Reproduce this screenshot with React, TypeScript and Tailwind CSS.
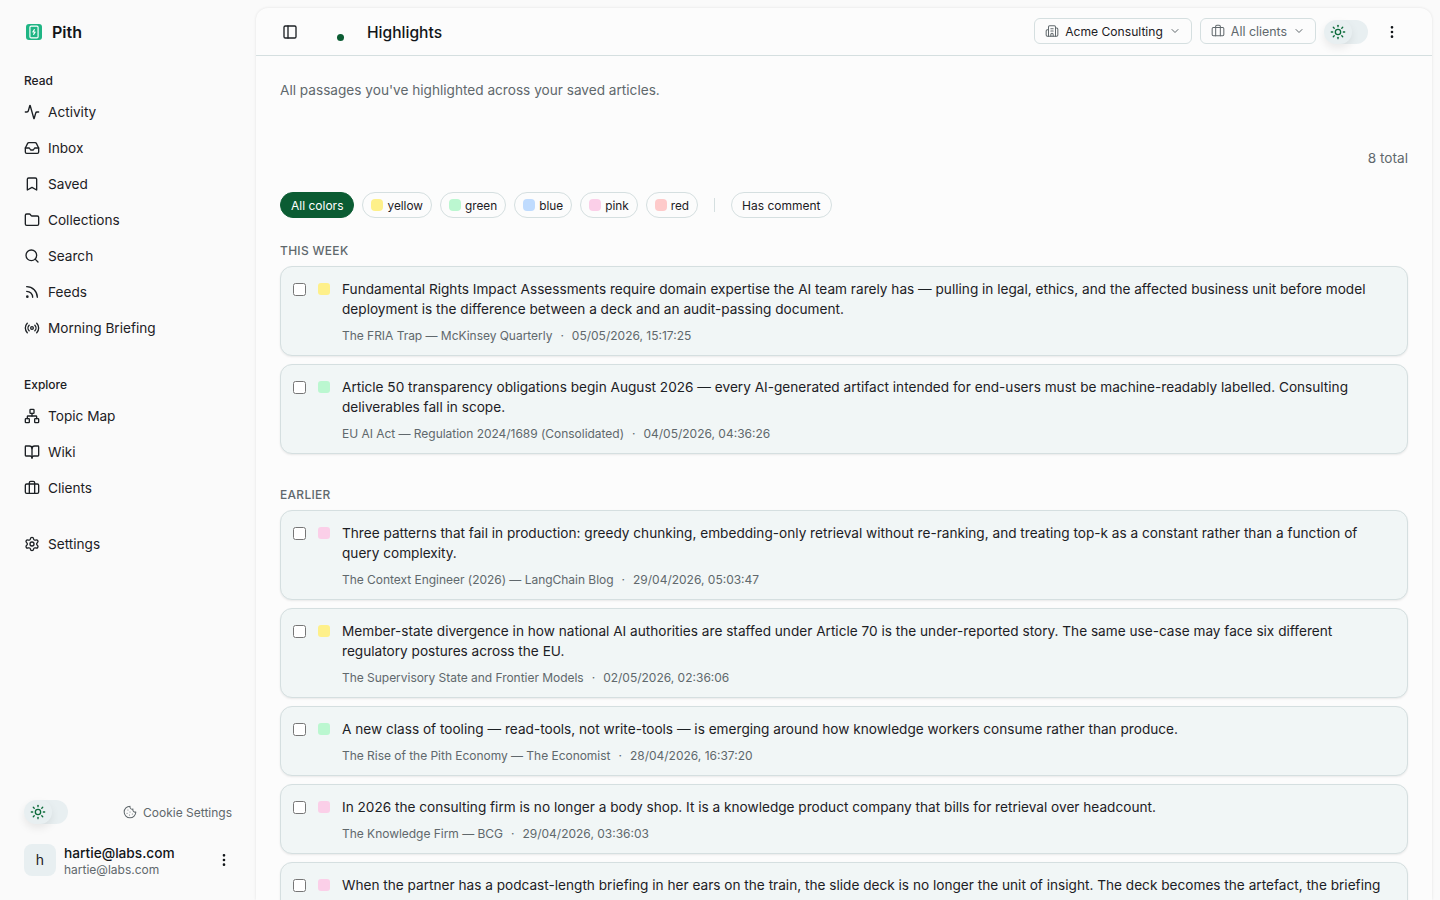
import React from "react";
import { Activity, Inbox, Bookmark, Folder, Search, Rss, Radio, Network, BookOpen, Briefcase, Settings, Cookie, Sun, EllipsisVertical, PanelLeft, Building2, ChevronDown, SmartphoneCharging } from "lucide-react";

const read = [
  { label: "Activity", Icon: Activity },
  { label: "Inbox", Icon: Inbox },
  { label: "Saved", Icon: Bookmark },
  { label: "Collections", Icon: Folder },
  { label: "Search", Icon: Search },
  { label: "Feeds", Icon: Rss },
  { label: "Morning Briefing", Icon: Radio },
];
const explore = [
  { label: "Topic Map", Icon: Network },
  { label: "Wiki", Icon: BookOpen },
  { label: "Clients", Icon: Briefcase },
];

function NavItem({ label, Icon }: { label: string; Icon: React.ElementType }) {
  return (
    <div className="flex h-9 items-center gap-2 text-[13.64px] text-[#1c2024]">
      <Icon size={16} strokeWidth={2} className="shrink-0" />
      <span>{label}</span>
    </div>
  );
}

function ThemeToggle() {
  return (
    <div className="flex h-6 w-11 items-center rounded-full bg-[#e8eff1]">
      <div className="flex h-6 w-7 items-center justify-center rounded-full shadow-[0_4px_8px_rgba(0,0,0,0.08)]">
        <Sun size={16} strokeWidth={2} className="text-[#0b6b3a]" />
      </div>
    </div>
  );
}

const colors: Record<string, string> = {
  yellow: "bg-[#fef08a]",
  green: "bg-[#bbf7d0]",
  blue: "bg-[#bfdbfe]",
  pink: "bg-[#fbcfe8]",
  red: "bg-[#fecaca]",
};

function Chip({ name }: { name: string }) {
  return (
    <div className="flex h-[26px] items-center gap-1 rounded-full border border-[#d5dfe0] px-2 text-[11.8px] text-[#1c2024]">
      <span className={`h-3 w-3 rounded ${colors[name]}`} />
      <span className="pt-[3px]">{name}</span>
    </div>
  );
}

function Card({ color, text, source, date }: { color: string; text: string; source: string; date: string }) {
  return (
    <div className="flex gap-3 rounded-xl border border-[#d5dfe0] bg-[#f1f6f6] px-3 pb-[11px] pt-3 shadow-[0_1px_2px_rgba(0,0,0,0.08)]">
      <input type="checkbox" className="mt-1 h-[13px] w-[13px] shrink-0" />
      <span className={`mt-1 h-3 w-3 shrink-0 rounded-[3px] ${colors[color]}`} />
      <div className="min-w-0 flex-1">
        <p className="text-[13.64px] leading-5 text-[#1c2024]">{text}</p>
        <p className="mt-[9px] flex gap-2 text-xs leading-4 text-[#60686c]">
          <span className="tracking-[-0.03px]">{source}</span>
          <span>·</span>
          <span>{date}</span>
        </p>
      </div>
    </div>
  );
}

export default function App() {
  return (
    <div className="flex h-[900px] overflow-hidden bg-[#fafafa] font-['Inter',sans-serif]">
      <aside className="flex w-[256px] shrink-0 flex-col px-6 pb-6">
        <div className="flex h-16 items-center gap-2.5 pl-0.5">
          <div className="flex h-4 w-4 items-center justify-center rounded-[3px] bg-[#1fb584]">
            <SmartphoneCharging size={14} strokeWidth={2} className="text-white" />
          </div>
          <span className="text-base font-semibold text-[#111518]">Pith</span>
        </div>
        <div className="mt-[9px] text-xs font-medium leading-4 text-[#1c2024]">Read</div>
        <div className="mt-[5px]">
          {read.map((i) => <NavItem key={i.label} {...i} />)}
        </div>
        <div className="mt-[31px] text-xs font-medium leading-4 text-[#1c2024]">Explore</div>
        <div className="mt-[5px]">
          {explore.map((i) => <NavItem key={i.label} {...i} />)}
        </div>
        <div className="mt-5">
          <NavItem label="Settings" Icon={Settings} />
        </div>
        <div className="mt-auto">
          <div className="flex items-center justify-between">
            <ThemeToggle />
            <div className="flex items-center gap-1.5 text-xs text-[#60686c]">
              <Cookie size={14} strokeWidth={1.75} />
              <span className="pt-0.5">Cookie Settings</span>
            </div>
          </div>
          <div className="mt-5 flex h-8 items-center gap-2">
            <div className="flex h-8 w-8 items-center justify-center rounded-lg bg-[#e8eff1] text-sm text-[#1c2024]">h</div>
            <div className="flex-1">
              <div className="text-[13.7px] font-medium leading-[18px] text-[#111518]">hartie@labs.com</div>
              <div className="pt-px text-xs leading-[14px] text-[#60686c]">hartie@labs.com</div>
            </div>
            <EllipsisVertical size={16} strokeWidth={2} className="text-[#111518]" />
          </div>
        </div>
      </aside>
      <main className="mr-2 mt-2 flex min-w-0 flex-1 flex-col overflow-hidden rounded-t-xl bg-[#fcfcfc] shadow-[0_0_3px_rgba(0,0,0,0.1)]">
        <header className="flex h-12 shrink-0 items-center border-b border-[#d5dfe0] pl-[26px] pr-8">
          <PanelLeft size={16} strokeWidth={2} className="text-[#1c2024]" />
          <span className="ml-[39px] mt-3 h-[7px] w-[7px] rounded-full bg-[#0b5c33]" />
          <h1 className="ml-[23px] pt-0.5 text-[15.6px] font-medium text-[#111518]">Highlights</h1>
          <div className="ml-auto flex items-center">
            <div className="mb-px flex h-[26px] items-center gap-1.5 rounded-md border border-[#d5dfe0] px-2.5 text-[12.1px] text-[#1c2024]">
              <Building2 size={14} strokeWidth={1.75} className="text-[#60686c]" />
              <span className="pt-0.5">Acme Consulting</span>
              <ChevronDown size={12} className="text-[#60686c]" />
            </div>
            <div className="mb-px ml-2 flex h-[26px] items-center gap-1.5 rounded-md border border-[#d5dfe0] px-2.5 text-[12.4px] text-[#60686c]">
              <Briefcase size={14} strokeWidth={1.75} />
              <span className="pt-0.5">All clients</span>
              <ChevronDown size={12} />
            </div>
            <div className="ml-2"><ThemeToggle /></div>
            <EllipsisVertical size={16} strokeWidth={2} className="ml-4 text-[#111518]" />
          </div>
        </header>
        <div className="flex-1 overflow-hidden px-6 pt-6">
          <p className="text-[13.64px] leading-5 text-[#60686c]">All passages you've highlighted across your saved articles.</p>
          <p className="mt-[48px] text-right text-[13.64px] leading-5 text-[#60686c]">8 total</p>
          <div className="mt-6 flex items-center gap-2">
            <div className="flex h-[26px] items-center rounded-full border border-[#0b5c33] bg-[#0b5c33] px-2.5 pt-px text-xs text-white">All colors</div>
            <Chip name="yellow" />
            <Chip name="green" />
            <Chip name="blue" />
            <Chip name="pink" />
            <Chip name="red" />
            <div className="mx-2 h-3.5 w-px bg-[#d5dfe0]" />
            <div className="flex h-[26px] items-center rounded-full border border-[#d5dfe0] px-2.5 pt-px text-xs text-[#1c2024]">Has comment</div>
          </div>
          <h2 className="mt-[25px] text-xs font-medium leading-4 tracking-wide text-[#60686c]">THIS WEEK</h2>
          <div className="mt-[7px] flex flex-col gap-2">
            <Card color="yellow" text="Fundamental Rights Impact Assessments require domain expertise the AI team rarely has — pulling in legal, ethics, and the affected business unit before model deployment is the difference between a deck and an audit-passing document." source="The FRIA Trap — McKinsey Quarterly" date="05/05/2026, 15:17:25" />
            <Card color="green" text="Article 50 transparency obligations begin August 2026 — every AI-generated artifact intended for end-users must be machine-readably labelled. Consulting deliverables fall in scope." source="EU AI Act — Regulation 2024/1689 (Consolidated)" date="04/05/2026, 04:36:26" />
          </div>
          <h2 className="mt-[33px] text-xs font-medium leading-4 tracking-wide text-[#60686c]">EARLIER</h2>
          <div className="mt-[7px] flex flex-col gap-2">
            <Card color="pink" text="Three patterns that fail in production: greedy chunking, embedding-only retrieval without re-ranking, and treating top-k as a constant rather than a function of query complexity." source="The Context Engineer (2026) — LangChain Blog" date="29/04/2026, 05:03:47" />
            <Card color="yellow" text="Member-state divergence in how national AI authorities are staffed under Article 70 is the under-reported story. The same use-case may face six different regulatory postures across the EU." source="The Supervisory State and Frontier Models" date="02/05/2026, 02:36:06" />
            <Card color="green" text="A new class of tooling — read-tools, not write-tools — is emerging around how knowledge workers consume rather than produce." source="The Rise of the Pith Economy — The Economist" date="28/04/2026, 16:37:20" />
            <Card color="pink" text="In 2026 the consulting firm is no longer a body shop. It is a knowledge product company that bills for retrieval over headcount." source="The Knowledge Firm — BCG" date="29/04/2026, 03:36:03" />
            <Card color="pink" text="When the partner has a podcast-length briefing in her ears on the train, the slide deck is no longer the unit of insight. The deck becomes the artefact, the briefing becomes the product." source="The Audio Briefing" date="27/04/2026, 09:12:00" />
          </div>
        </div>
      </main>
    </div>
  );
}
